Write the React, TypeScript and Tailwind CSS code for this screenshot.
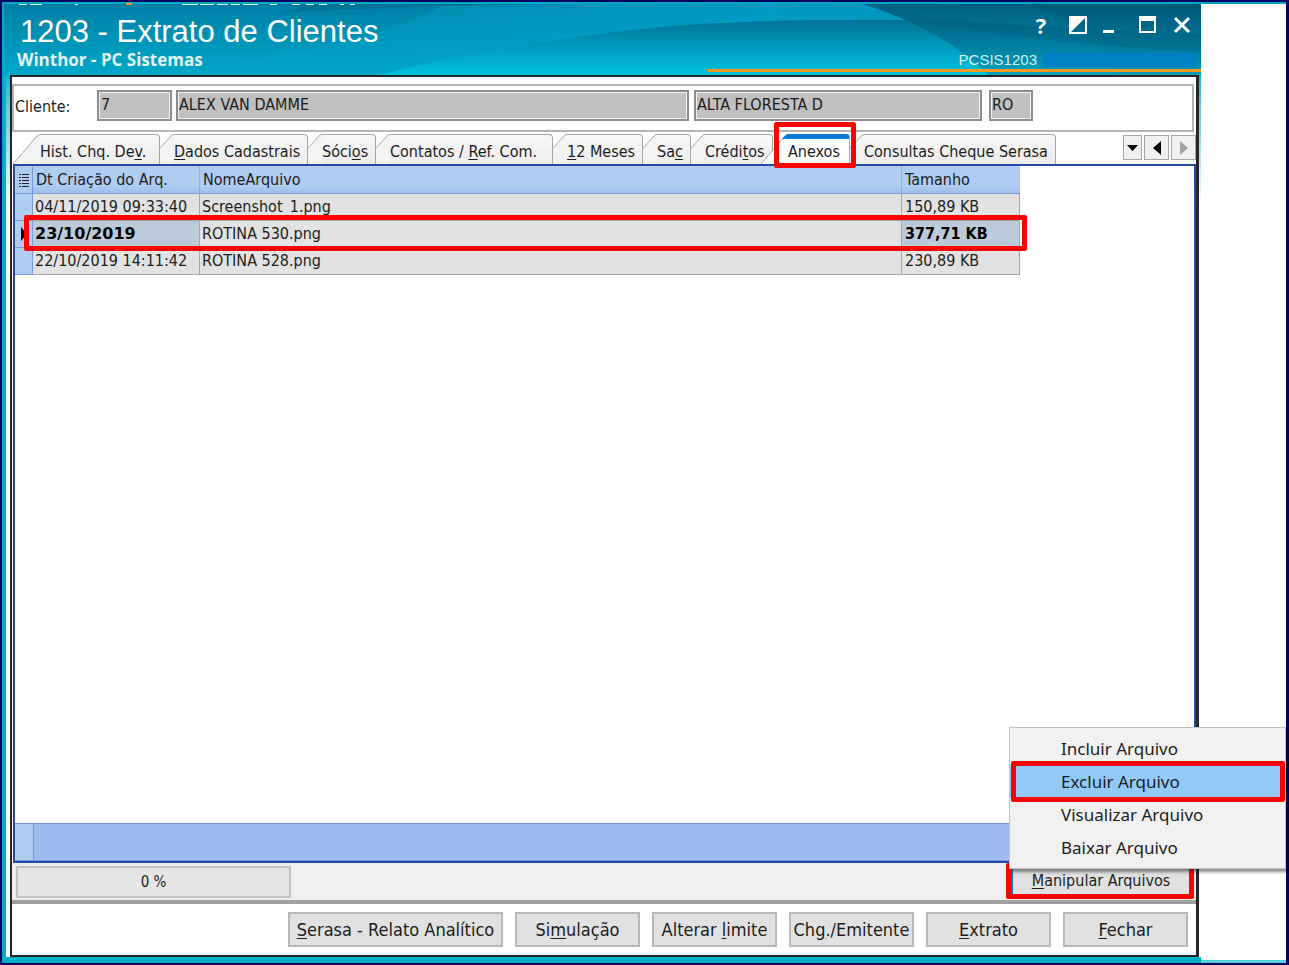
import type { ReactNode } from "react";

type Tab = { label: ReactNode; width: string; first?: boolean; active?: boolean };

const TABS: Tab[] = [
  { label: <>Hist. Chq. De<u>v</u>.</>, width: "w-[147px]", first: true },
  { label: <><u>D</u>ados Cadastrais</>, width: "w-[148px]" },
  { label: <>Sóci<u>o</u>s</>, width: "w-[68px]" },
  { label: <>Contatos / <u>R</u>ef. Com.</>, width: "w-[177px]" },
  { label: <><u>1</u>2 Meses</>, width: "w-[90px]" },
  { label: <>Sa<u>c</u></>, width: "w-[48px]" },
  { label: <>Crédi<u>t</u>os</>, width: "w-[82px]" },
  { label: "Anexos", width: "w-[89px]", active: true },
  { label: "Consultas Cheque Serasa", width: "w-[206px]" },
];

const FILES = [
  { date: "04/11/2019 09:33:40", name: "Screenshot_1.png", size: "150,89 KB" },
  { date: "23/10/2019", name: "ROTINA 530.png", size: "377,71 KB", selected: true },
  { date: "22/10/2019 14:11:42", name: "ROTINA 528.png", size: "230,89 KB" },
];

const MENU = ["Incluir Arquivo", "Excluir Arquivo", "Visualizar Arquivo", "Baixar Arquivo"];

const ACTIONS = [
  { id: "serasa", label: <><u>S</u>erasa - Relato Analítico</>, width: "w-[215px]" },
  { id: "simulacao", label: <>Si<u>m</u>ulação</>, width: "w-[125px]" },
  { id: "limite", label: <>Alterar <u>l</u>imite</>, width: "w-[125px]" },
  { id: "emitente", label: <>Ch<u>g</u>./Emitente</>, width: "w-[125px]" },
  { id: "extrato", label: <><u>E</u>xtrato</>, width: "w-[125px]" },
  { id: "fechar", label: <><u>F</u>echar</>, width: "w-[125px]" },
];

function Highlight({ className }: { className: string }) {
  return <span className={`pointer-events-none absolute z-10 rounded-xs border-5 border-[#ff0000] ${className}`} />;
}

// Slivers of the desktop that show above the window
function BackdropEdge() {
  return (
    <svg className="absolute top-0 left-0" width="360" height="3" viewBox="0 0 360 3" aria-hidden="true">
      <path d="M17 2.5H25M28 2.5H40M73 2.5H76M180 2.5H196M198 2.5H212M215 2.5H226M229 2.5H238M241 2.5H256M268 2.5H275M290 2.5H298M304 2.5H312M317 2.5H325M338 2.5H342M348 2.5H353" stroke="#e8e8f0" />
      <path d="M124 2H130" stroke="#f7981d" strokeWidth="2" />
    </svg>
  );
}

function HeaderWaves() {
  return (
    <svg className="absolute inset-0 h-full w-full" viewBox="0 0 1197 71" preserveAspectRatio="none" aria-hidden="true">
      <defs>
        <linearGradient id="base" x1="0" y1="0" x2="0" y2="1">
          <stop offset="0" stopColor="#007fa6" />
          <stop offset="1" stopColor="#00a8c8" />
        </linearGradient>
        <linearGradient id="glow" x1="0" y1="0" x2="1" y2="0">
          <stop offset="0" stopColor="#00a8cc" stopOpacity="0" />
          <stop offset="0.6" stopColor="#00a4cc" stopOpacity="0.7" />
          <stop offset="1" stopColor="#0098c4" stopOpacity="0.5" />
        </linearGradient>
        <linearGradient id="arc" gradientUnits="userSpaceOnUse" x1="0" y1="14" x2="0" y2="71">
          <stop offset="0" stopColor="#007094" />
          <stop offset="0.45" stopColor="#0096b8" />
          <stop offset="1" stopColor="#00c2de" />
        </linearGradient>
        <linearGradient id="shade" x1="0" y1="0" x2="0" y2="1">
          <stop offset="0" stopColor="#00506e" />
          <stop offset="0.5" stopColor="#007092" />
          <stop offset="1" stopColor="#0094b4" />
        </linearGradient>
      </defs>
      <rect width="1197" height="71" fill="url(#base)" />
      <path d="M280 0H1197V71H120Q360 50 440 0Z" fill="url(#glow)" />
      <path d="M270 0H560Q400 2 270 9Q320 4 270 0Z" fill="#006488" opacity="0.5" />
      <path d="M376 71Q460 49 588 31Q700 14 900 16L1197 30V71Z" fill="url(#arc)" />
      <path d="M859 0Q940 26 984 71H1197V0Z" fill="url(#shade)" opacity="0.75" />
      <path d="M1023 0Q1094 24 1115 71H1197V0Z" fill="url(#shade)" opacity="0.55" />
      <path d="M880 8Q1040 26 1197 30V48Q1040 40 905 16Z" fill="#005874" opacity="0.25" />
      <rect x="704" y="65" width="493" height="3" fill="#f7981d" />
    </svg>
  );
}

function TitleBar() {
  return (
    <header className="relative flex h-[71px] shrink-0 justify-between overflow-hidden text-white">
      <HeaderWaves />
      <div className="relative pt-3 pl-3">
        <h1 className="pl-1 font-['Liberation_Sans',sans-serif] text-[31px] leading-8">1203 - Extrato de Clientes</h1>
        <p className="mt-0.5 pl-px font-['Open_Sans',sans-serif] text-[17px] leading-5 font-bold text-[#e4f6fa]">Winthor - PC Sistemas</p>
      </div>
      <div className="relative flex flex-col items-end pr-1.5">
        <div className="mt-2 flex h-6 items-center gap-4 pt-0.5 pr-1">
          <button aria-label="Ajuda" className="w-4 font-['Open_Sans',sans-serif] text-[22px] leading-6 font-bold">?</button>
          <button aria-label="Alternar tema" className="ml-1">
            <svg width="18" height="18" viewBox="0 0 18 18">
              <path d="M0 0H18L0 18Z" fill="#fff" />
              <rect x="1" y="1" width="16" height="16" fill="none" stroke="#fff" strokeWidth="2" />
            </svg>
          </button>
          <button aria-label="Minimizar">
            <svg width="12" height="18" viewBox="0 0 12 18"><path d="M0 15.5H11" stroke="#fff" strokeWidth="3" /></svg>
          </button>
          <button aria-label="Maximizar" className="ml-2">
            <svg width="18" height="18" viewBox="0 0 18 18">
              <rect x="1" y="1" width="15" height="15" fill="none" stroke="#fff" strokeWidth="2" />
              <path d="M0 2.5H17" stroke="#fff" strokeWidth="5" />
            </svg>
          </button>
          <button aria-label="Fechar janela">
            <svg width="18" height="18" viewBox="0 0 18 18"><path d="M2 2L16 16M16 2L2 16" stroke="#fff" strokeWidth="3" /></svg>
          </button>
        </div>
        <div className="mt-3.5 flex items-center gap-1.5">
          <span className="font-['Liberation_Sans',sans-serif] text-[15px] leading-5 text-[#d9f0f5]">PCSIS1203</span>
          <span className="h-3.5 w-[152px] rounded-xs bg-[#0080c4]" />
        </div>
      </div>
    </header>
  );
}

function Field({ label, value, className }: { label: string; value: string; className: string }) {
  return (
    <input
      aria-label={label}
      readOnly
      defaultValue={value}
      className={`h-[31px] border-2 border-[#8c8c8c] bg-[#c0c0c0] pb-px pl-px text-base text-[#1c1c1c] shadow-[inset_0_0_0_1px_#f2f2f2] outline-none ${className}`}
    />
  );
}

function TabButton({ label, width, first, active }: Tab) {
  const fill = active ? "#fff" : "#f3f3f3";
  const wide = first || active;
  return (
    <button
      role="tab"
      aria-selected={!!active}
      className={`relative flex h-[30px] shrink-0 ${width} ${active ? "z-10 -ml-3" : ""}`}
    >
      {wide ? (
        <svg width="27" height="30" viewBox="0 0 27 30" className="shrink-0">
          <path d="M0 30L24 2Q26 0.5 27 0.5V30Z" fill={fill} />
          <path d="M0 30L24 2Q26 0.5 27 0.5" fill="none" stroke="#a6a6a6" />
          {active && <path d="M21 5L25 1L27 0V5Z" fill="#0078d7" />}
        </svg>
      ) : (
        <svg width="14" height="30" viewBox="0 0 14 30" className="shrink-0">
          <path d="M0 14L11 2Q12 0.5 14 0.5V30H0Z" fill={fill} />
          <path d="M0 14L11 2Q12 0.5 14 0.5" fill="none" stroke="#a6a6a6" />
        </svg>
      )}
      <span
        className={`h-full flex-1 rounded-tr border-r border-[#a6a6a6] text-left text-base leading-6 whitespace-nowrap ${
          active ? "border-t-5 border-t-[#0078d7] bg-white pt-px" : "border-t bg-linear-to-b from-[#f8f8f8] to-[#ececec] pt-[5px]"
        }`}
      >
        {label}
      </span>
      {active && <Highlight className="-top-3 -right-[6px] h-[46px] w-[82px]" />}
    </button>
  );
}

function TabBar() {
  return (
    <div className="flex items-start pt-0.5 pl-px">
      <div role="tablist" className="flex flex-1">
        {TABS.map((tab, i) => (
          <TabButton key={i} {...tab} />
        ))}
      </div>
      <div className="flex gap-0.5 pt-px">
        <button aria-label="Lista de abas" className="flex h-[25px] w-[19px] items-center justify-center border border-[#a6a6a6] bg-[#f0f0f0]">
          <svg width="11" height="6" viewBox="0 0 11 6"><path d="M0 0H11L5.5 6Z" fill="#000" /></svg>
        </button>
        <button aria-label="Aba anterior" className="flex h-[25px] w-[25px] items-center justify-center border border-[#a6a6a6] bg-[#f0f0f0]">
          <svg width="8" height="14" viewBox="0 0 8 14"><path d="M8 0V14L0 7Z" fill="#000" /></svg>
        </button>
        <button aria-label="Próxima aba" disabled className="flex h-[25px] w-[25px] items-center justify-center border border-[#a6a6a6] bg-[#f0f0f0]">
          <svg width="8" height="14" viewBox="0 0 8 14"><path d="M0 0V14L8 7Z" fill="#a0a0a0" /></svg>
        </button>
      </div>
    </div>
  );
}

function FileGrid() {
  const head = "border-b border-[#7b9bd8] bg-linear-to-b from-[#b0ccf0] from-75% to-[#9dbdec] pl-[3px] text-left font-normal";
  return (
    <div className="relative">
      <table className="w-[1005px] table-fixed border-separate border-spacing-0 text-base leading-6">
        <colgroup>
          <col className="w-[18px]" />
          <col className="w-[167px]" />
          <col />
          <col className="w-[118px]" />
        </colgroup>
        <thead>
          <tr className="h-7">
            <th aria-label="Marcador" className="border-r border-b border-[#7b9bd8] bg-[#b0ccf0] pl-1">
              <svg width="10" height="14" viewBox="0 0 10 14" stroke="#222">
                <path d="M0 1.5H2M3 1.5H10M0 4.5H2M3 4.5H10M0 7.5H2M3 7.5H10M0 10.5H2M3 10.5H10M0 13.5H2M3 13.5H10" />
              </svg>
            </th>
            <th className={`${head} border-r border-r-[#8fafe4]`}>Dt Criação do Arq.</th>
            <th className={`${head} border-r border-r-[#8fafe4]`}>NomeArquivo</th>
            <th className={head}>Tamanho</th>
          </tr>
        </thead>
        <tbody>
          {FILES.map((file) => {
            const marked = file.selected ? "bg-[#bccbda] font-bold text-black" : "";
            return (
              <tr key={file.name} className="h-[27px] bg-[#e2e2e2]">
                <td className="border-r border-b border-[#7b9bd8] bg-[#b0ccf0] pl-1.5">
                  {file.selected && (
                    <svg width="6" height="14" viewBox="0 0 6 14"><path d="M0 0L6 7L0 14Z" fill="#000" /></svg>
                  )}
                </td>
                <td
                  className={`border-r border-b border-[#a6a6a6] pl-0.5 whitespace-nowrap ${marked} ${
                    file.selected ? "font-['DejaVu_Sans',sans-serif]" : ""
                  }`}
                >
                  {file.date}
                </td>
                <td className="border-r border-b border-[#a6a6a6] pl-0.5">{file.name}</td>
                <td className={`border-r border-b border-[#a6a6a6] pl-[3px] ${marked}`}>{file.size}</td>
              </tr>
            );
          })}
        </tbody>
      </table>
      <Highlight className="top-[49px] left-[9px] h-9 w-[1003px]" />
    </div>
  );
}

function FileMenu() {
  return (
    <div
      role="menu"
      className="absolute bottom-full left-[-2px] z-20 -mb-1.5 w-[277px] border border-[#c4c4c4] bg-[#f1f1f1] py-1 font-['Noto_Sans',sans-serif] text-[17px] shadow-[3px_3px_3px_rgba(0,0,0,0.45)]"
    >
      {MENU.map((item) => {
        const current = item === "Excluir Arquivo";
        return (
          <button
            key={item}
            role="menuitem"
            className={`relative block h-[33px] w-full pl-[51px] text-left leading-8 ${current ? "bg-[#91c9f7]" : ""}`}
          >
            {item}
            {current && <Highlight className="-top-1 right-0 left-px h-[41px]" />}
          </button>
        );
      })}
    </div>
  );
}

function StatusRow() {
  return (
    <div className="flex h-[37px] shrink-0 items-start justify-between bg-[#efefef] pr-[7px] pl-1">
      <div
        role="progressbar"
        aria-valuenow={0}
        aria-label="Progresso"
        className="mt-[3px] flex h-8 w-[275px] items-center justify-center border-2 border-[#c4c4c4] bg-[#e5e5e5] text-[15px]"
      >
        0 %
      </div>
      <div className="relative">
        <button className="mt-px h-[33px] w-[178px] border-l-2 border-[#0078d7] bg-[#e1e1e1] text-base leading-8">
          <u>M</u>anipular Arquivos
        </button>
        <Highlight className="top-0 -left-[5px] h-9 w-[188px]" />
        <FileMenu />
      </div>
    </div>
  );
}

export default function App() {
  return (
    <div className="relative flex h-screen min-h-[600px] border-2 border-r-3 border-[#000060] bg-white font-['DejaVu_Sans_Condensed','DejaVu_Sans',sans-serif] text-[#1c1c1c] [&_u]:underline-offset-2">
      <main className="flex min-w-0 flex-1 flex-col border-2 border-r-0 border-[#00a8c4]">
        <TitleBar />
        <div className="flex min-h-0 flex-1 flex-col border-b-4 border-l-2 border-[#00b4cc] bg-linear-to-b from-[#00b4cc] via-white via-15% to-white pr-0.5 pl-1">
          <div className="flex min-h-0 flex-1 flex-col border-2 border-r-3 border-[#262626] bg-white">
            <section className="mt-[7px] mr-0.5 flex h-12 shrink-0 items-center border-2 border-[#b4b4b4] pb-1.5 pl-px">
              <label htmlFor="cliente" className="w-[82px] pt-1 text-base">Cliente:</label>
              <input
                id="cliente"
                readOnly
                defaultValue="7"
                className="h-[31px] w-[75px] border-2 border-[#8c8c8c] bg-[#c0c0c0] pb-px pl-0.5 text-base shadow-[inset_0_0_0_1px_#f2f2f2] outline-none"
              />
              <Field label="Nome" value="ALEX VAN DAMME" className="ml-1 w-[513px]" />
              <Field label="Cidade" value="ALTA FLORESTA D" className="ml-[5px] w-[288px]" />
              <Field label="UF" value="RO" className="ml-[7px] w-11" />
            </section>
            <TabBar />
            <section className="ml-px flex min-h-0 flex-1 flex-col justify-between border-2 border-[#2549a8]">
              <FileGrid />
              <div className="flex h-[38px] border-y border-[#7094d8] bg-[#9fbcf4]">
                <div className="w-[19px] border-r border-[#7094d8] bg-[#b0ccf0]" />
              </div>
            </section>
            <StatusRow />
            <footer className="flex shrink-0 justify-end gap-3 border-t-4 border-[#a0a0a0] bg-white pt-2 pr-2 pb-2">
              {ACTIONS.map((action) => (
                <button
                  key={action.id}
                  className={`h-[35px] border-2 border-[#b8b8b8] bg-[#e1e1e1] text-lg leading-7 whitespace-nowrap ${action.width}`}
                >
                  {action.label}
                </button>
              ))}
            </footer>
          </div>
        </div>
      </main>
      <aside className="w-[85px] shrink-0 border-t-2 border-b-3 border-t-[#00a8c4] border-b-[#58d0dc]" />
      <BackdropEdge />
    </div>
  );
}
